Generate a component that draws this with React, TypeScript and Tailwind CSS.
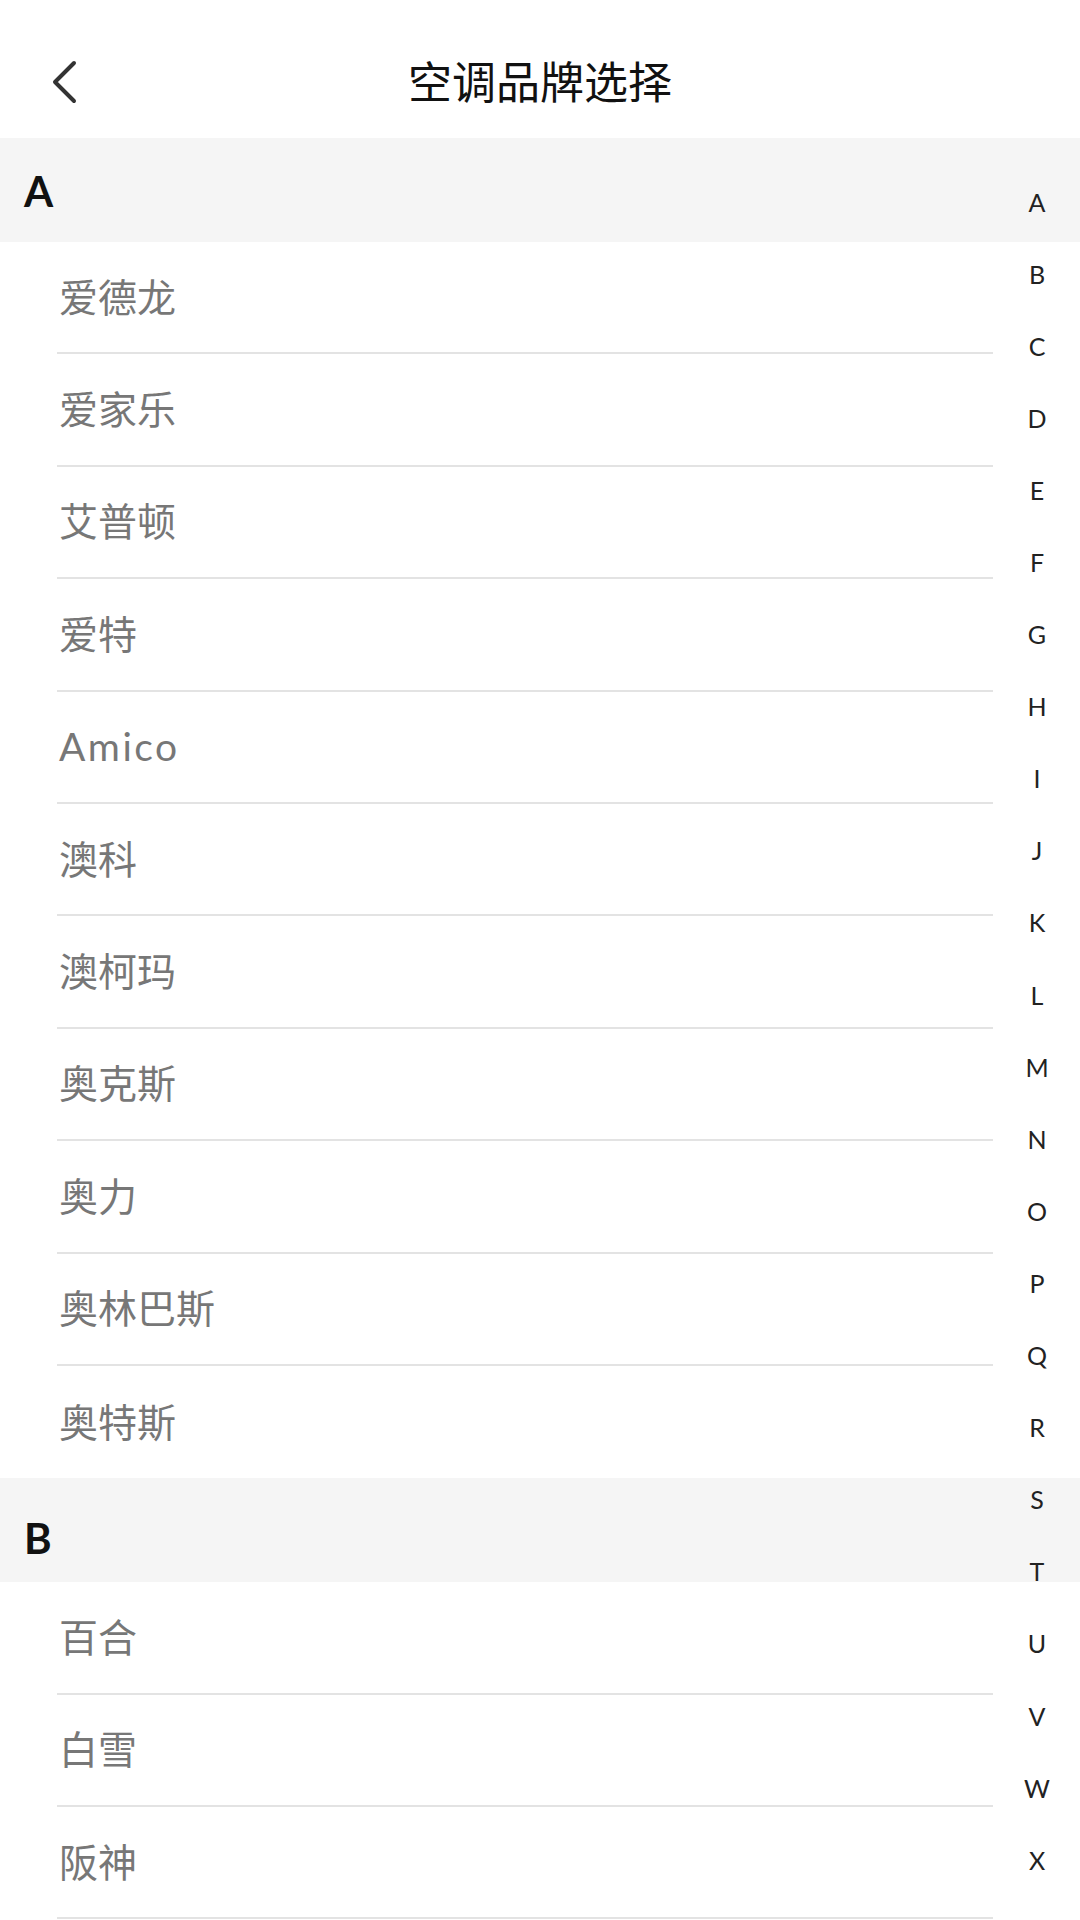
import React from "react";

const sections: { letter: string; items: string[] }[] = [
  {
    letter: "A",
    items: ["爱德龙", "爱家乐", "艾普顿", "爱特", "Amico", "澳科", "澳柯玛", "奥克斯", "奥力", "奥林巴斯", "奥特斯"],
  },
  { letter: "B", items: ["百合", "白雪", "阪神"] },
];

const index = "ABCDEFGHIJKLMNOPQRSTUVWX".split("");

export default function App() {
  return (
    <div
      className="relative w-[1080px] h-[1920px] overflow-hidden bg-white"
      style={{ fontFamily: 'Lato, "Noto Sans CJK SC", sans-serif' }}
    >
      <div className="relative h-[138px] flex items-center justify-center">
        <svg
          className="absolute left-[48px] top-[60px]"
          width="32"
          height="44"
          viewBox="0 0 32 44"
          fill="none"
        >
          <path d="M26 3 L7 22 L26 41" stroke="#333" strokeWidth="4" strokeLinecap="round" strokeLinejoin="round" />
        </svg>
        <div className="text-[44px] text-[#111] leading-none mt-[26px]">空调品牌选择</div>
      </div>

      {sections.map((s, si) => (
        <div key={s.letter}>
          <div className="h-[104px] bg-[#f5f5f5] flex items-center pl-[24px]">
            <span
              className={
                "text-[42px] font-bold text-[#111] leading-none " + (si === 1 ? "mt-[16px]" : "mt-[2px]")
              }
            >
              {s.letter}
            </span>
          </div>
          {s.items.map((it, i) => (
            <div key={it} className="pl-[57px] pr-[87px]">
              <div
                className={
                  "h-[112.4px] flex items-center " +
                  (i < s.items.length - 1 || si === 1 ? "border-b-2 border-[#e3e3e3]" : "")
                }
              >
                <span
                  className={
                    "text-[39px] text-[#777] leading-none pl-[2px] " + (it === "Amico" ? "tracking-[2.5px]" : "")
                  }
                >
                  {it}
                </span>
              </div>
            </div>
          ))}
        </div>
      ))}

      <div className="absolute right-0 top-[166px] w-[86px] flex flex-col items-center">
        {index.map((l) => (
          <div key={l} className="h-[72.1px] flex items-center justify-center text-[25px] text-[#222] leading-none">
            {l}
          </div>
        ))}
      </div>
    </div>
  );
}
